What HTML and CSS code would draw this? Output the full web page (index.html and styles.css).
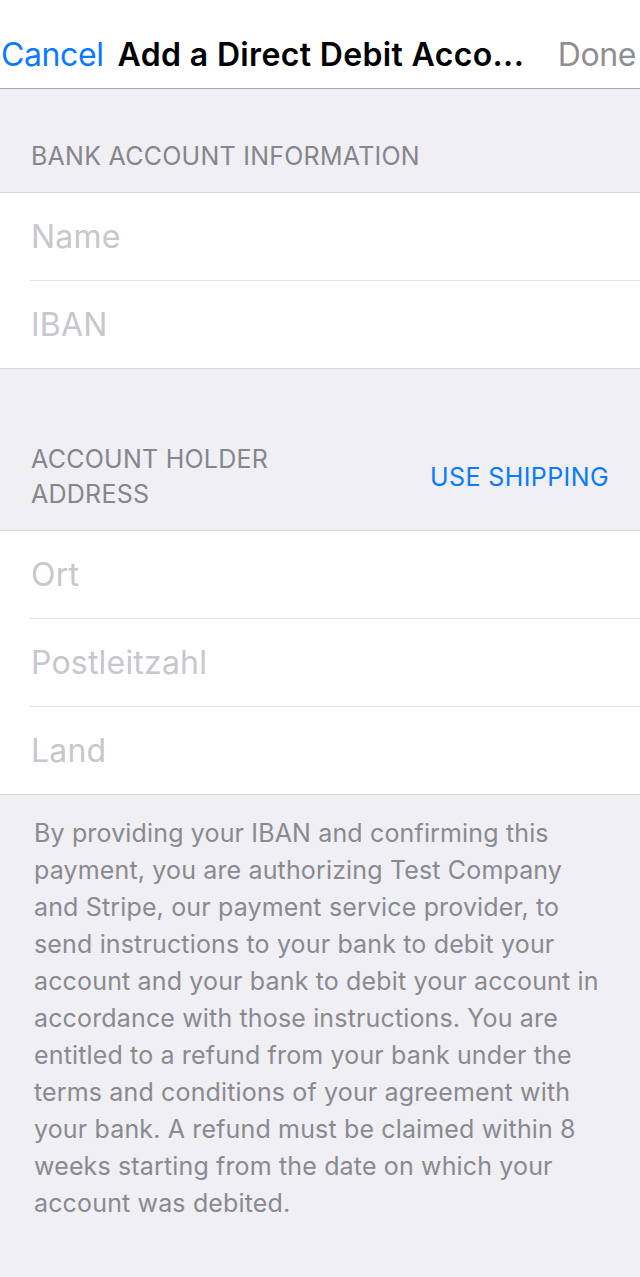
FILE: index.html
```html
<!DOCTYPE html>
<html>
<head>
<meta charset="utf-8">
<link rel="stylesheet" href="styles.css">
</head>
<body>
<div class="nav">
  <span class="nav-btn cancel">Cancel</span>
  <span class="nav-title">Add a Direct Debit Acco...</span>
  <span class="nav-btn done">Done</span>
</div>
<div class="section-header first">
  <span class="header-text">BANK ACCOUNT INFORMATION</span>
</div>
<div class="group">
  <div class="row"><span class="placeholder">Name</span></div>
  <div class="row"><span class="placeholder">IBAN</span></div>
</div>
<div class="section-header second">
  <span class="header-text">ACCOUNT HOLDER<br>ADDRESS</span>
  <span class="header-action">USE SHIPPING</span>
</div>
<div class="group">
  <div class="row"><span class="placeholder">Ort</span></div>
  <div class="row"><span class="placeholder">Postleitzahl</span></div>
  <div class="row"><span class="placeholder">Land</span></div>
</div>
<div class="footer">
  <p class="footer-text">By providing your IBAN and confirming this payment, you are authorizing Test Company and Stripe, our payment service provider, to send instructions to your bank to debit your account and your bank to debit your account in accordance with those instructions. You are entitled to a refund from your bank under the terms and conditions of your agreement with your bank. A refund must be claimed within 8 weeks starting from the date on which your account was debited.</p>
</div>
</body>
</html>
```
FILE: styles.css
```css
html, body {
  margin: 0;
  padding: 0;
}
body {
  width: 640px;
  min-height: 1277px;
  background: #efeff4;
  font-family: Inter, Roboto, "Liberation Sans", sans-serif;
  overflow: hidden;
}
.nav {
  height: 89px;
  background: #ffffff;
  border-bottom: 1px solid #a9a9ad;
  display: flex;
  align-items: flex-end;
  padding-left: 1px;
  padding-bottom: 14px;
  overflow: hidden;
  white-space: nowrap;
  box-sizing: border-box;
}
.nav-btn {
  font-size: 32px;
  line-height: 38px;
  letter-spacing: -0.4px;
}
.cancel {
  color: #0a7aff;
}
.nav-title {
  font-size: 32px;
  line-height: 38px;
  font-weight: 600;
  color: #000;
  margin-left: 14px;
  letter-spacing: 0.35px;
}
.done {
  color: #8e8e93;
  margin-left: auto;
  margin-right: 4px;
}
.section-header {
  display: flex;
  align-items: flex-end;
  justify-content: space-between;
  padding: 0 31px;
  border-bottom: 1px solid #d8d8dc;
  box-sizing: border-box;
}
.section-header.first {
  height: 104px;
  padding-bottom: 18px;
}
.section-header.second {
  height: 162px;
  padding-bottom: 18px;
}
.header-text {
  font-size: 25px;
  line-height: 35px;
  color: #86868b;
  letter-spacing: 0.25px;
}
.header-action {
  font-size: 25px;
  line-height: 35px;
  color: #0a7aff;
  margin-bottom: 17px;
  letter-spacing: 0.4px;
}
.group {
  background: #ffffff;
  padding-left: 30px;
  border-bottom: 1px solid #d8d8dc;
}
.row {
  height: 88px;
  display: flex;
  align-items: center;
  border-bottom: 1px solid #e3e3e6;
  box-sizing: border-box;
  padding-left: 1px;
}
.row:last-child {
  border-bottom: none;
  height: 87px;
}
.placeholder {
  font-size: 32px;
  color: #c7c7cd;
  letter-spacing: 0.2px;
}
.footer {
  padding: 20px 31px 0 34px;
}
.footer-text {
  margin: 0;
  font-size: 25px;
  line-height: 37px;
  color: #8a8a8f;
  letter-spacing: 0.15px;
}
```
